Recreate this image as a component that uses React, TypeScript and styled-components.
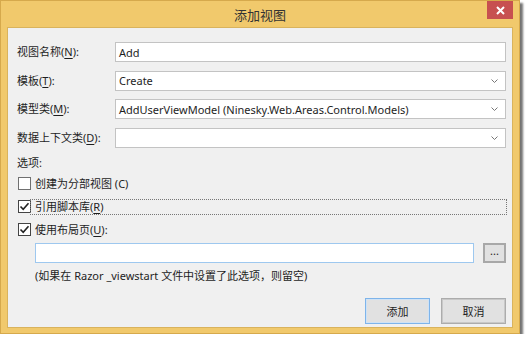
import React from 'react';
import styled, { createGlobalStyle } from 'styled-components';

const GlobalStyle = createGlobalStyle`
  body {
    margin: 0;
    background: #ffffff;
    font-family: "Noto Sans", "Noto Sans CJK SC", sans-serif;
  }
`;

const Window = styled.div`
  width: 518px;
  height: 332px;
  border: 1px solid #d6a94c;
  background: #f1c96c;
  box-shadow: 3px 3px 2px rgba(0, 0, 0, 0.55);
  display: flex;
  flex-direction: column;
`;

const TitleBar = styled.div`
  height: 26px;
  display: grid;
  grid-template-columns: 1fr auto 1fr;
  align-items: start;
`;

const Title = styled.div`
  grid-column: 2;
  padding-top: 5px;
  font-family: "Noto Sans CJK SC", sans-serif;
  font-size: 13px;
  line-height: 17px;
  color: #333333;
`;

const CloseButton = styled.div`
  grid-column: 3;
  justify-self: end;
  margin-right: 6px;
  width: 26px;
  height: 18px;
  background: #c75050;
  color: #ffffff;
  display: flex;
  align-items: center;
  justify-content: center;
`;

const Content = styled.div`
  flex: 1;
  margin: 0 6px 5px 6px;
  border: 1px solid #d9b35d;
  background: #f0f0f0;
  padding: 14px 6px 0 9px;
  display: flex;
  flex-direction: column;
  font-family: "Noto Sans", "Noto Sans CJK SC", sans-serif;
  font-size: 11px;
  color: #1e1e1e;
`;

const Fields = styled.div`
  display: flex;
  flex-direction: column;
  gap: 8.5px;
`;

const Row = styled.div`
  display: flex;
  align-items: center;
  height: 20px;
`;

const Label = styled.div`
  width: 98px;
  flex-shrink: 0;
  line-height: 16px;
`;

const Key = styled.span`
  text-decoration: underline;
  text-underline-offset: 2px;
`;

const Box = styled.div`
  flex: 1;
  height: 20px;
  box-sizing: border-box;
  border: 1px solid ${(p: { $focus?: boolean }) => (p.$focus ? '#9ec8ef' : '#c3c3c3')};
  background: #ffffff;
  display: flex;
  align-items: center;
  padding: 0 7px 0 3px;
  font-size: 11px;
  color: #1e1e1e;
`;

const BoxText = styled.span`
  flex: 1;
  white-space: nowrap;
`;

const SectionLabel = styled.div`
  margin-top: 7px;
  line-height: 16px;
`;

const Options = styled.div`
  margin-top: 6px;
  display: flex;
  flex-direction: column;
  gap: 9px;
`;

const CheckRow = styled.div`
  display: flex;
  align-items: center;
  height: 14px;
  padding-left: 1px;
`;

const CheckBox = styled.div`
  width: 13px;
  height: 13px;
  box-sizing: border-box;
  border: 1px solid ${(p: { $checked?: boolean }) => (p.$checked ? '#444444' : '#707070')};
  background: #ffffff;
  display: flex;
  align-items: center;
  justify-content: center;
  flex-shrink: 0;
`;

const CheckText = styled.div<{ $focused?: boolean }>`
  line-height: 14px;
  padding-left: 4px;
  ${(p) => (p.$focused ? 'flex: 1; outline: 1px dotted #777; outline-offset: 0;' : '')}
`;

const Layout = styled.div`
  margin-top: 6px;
  padding-left: 18px;
  display: flex;
  gap: 9px;
`;

const BrowseButton = styled.div`
  width: 23px;
  height: 20px;
  box-sizing: border-box;
  border: 2px solid #a8a8a8;
  background: #e1e1e1;
  display: flex;
  align-items: center;
  justify-content: center;
  font-size: 11px;
  line-height: 8px;
  padding-bottom: 4px;
`;

const Hint = styled.div`
  margin-top: 5px;
  padding-left: 18px;
  line-height: 16px;
`;

const Buttons = styled.div`
  margin-top: 14px;
  display: flex;
  justify-content: flex-end;
  gap: 11px;
`;

const Button = styled.div<{ $default?: boolean }>`
  width: 65px;
  height: 26px;
  box-sizing: border-box;
  border: 1px solid ${(p) => (p.$default ? '#7eb4ea' : '#acacac')};
  box-shadow: inset 0 0 0 1px ${(p) => (p.$default ? '#cfe2f5' : '#c8c8c8')};
  background: #e1e1e1;
  display: flex;
  align-items: center;
  justify-content: center;
  font-size: 11px;
`;

const Chevron = () => (
  <svg width="7" height="4" viewBox="0 0 7 4">
    <path d="M0.5 0.5 L3.5 3.5 L6.5 0.5" fill="none" stroke="#777" strokeWidth="1" />
  </svg>
);

const Check = () => (
  <svg width="11" height="11" viewBox="0 0 11 11">
    <path d="M1.5 5.5 L4.2 8.3 L9.5 2.2" fill="none" stroke="#222" strokeWidth="1.6" />
  </svg>
);

export default function App() {
  return (
    <>
      <GlobalStyle />
      <Window>
        <TitleBar>
          <Title>添加视图</Title>
          <CloseButton>
            <svg width="9" height="9" viewBox="0 0 9 9">
              <path d="M1 1 L8 8 M8 1 L1 8" stroke="#fff" strokeWidth="2" />
            </svg>
          </CloseButton>
        </TitleBar>
        <Content>
          <Fields>
            <Row>
              <Label>视图名称(<Key>N</Key>):</Label>
              <Box><BoxText>Add</BoxText></Box>
            </Row>
            <Row>
              <Label>模板(<Key>T</Key>):</Label>
              <Box><BoxText>Create</BoxText><Chevron /></Box>
            </Row>
            <Row>
              <Label>模型类(<Key>M</Key>):</Label>
              <Box><BoxText>AddUserViewModel (Ninesky.Web.Areas.Control.Models)</BoxText><Chevron /></Box>
            </Row>
            <Row>
              <Label>数据上下文类(<Key>D</Key>):</Label>
              <Box><BoxText /><Chevron /></Box>
            </Row>
          </Fields>
          <SectionLabel>选项:</SectionLabel>
          <Options>
            <CheckRow>
              <CheckBox />
              <CheckText>创建为分部视图 (C)</CheckText>
            </CheckRow>
            <CheckRow>
              <CheckBox $checked><Check /></CheckBox>
              <CheckText $focused>引用脚本库(<Key>R</Key>)</CheckText>
            </CheckRow>
            <CheckRow>
              <CheckBox $checked><Check /></CheckBox>
              <CheckText>使用布局页(<Key>U</Key>):</CheckText>
            </CheckRow>
          </Options>
          <Layout>
            <Box $focus />
            <BrowseButton>...</BrowseButton>
          </Layout>
          <Hint>(如果在 Razor _viewstart 文件中设置了此选项，则留空)</Hint>
          <Buttons>
            <Button $default>添加</Button>
            <Button>取消</Button>
          </Buttons>
        </Content>
      </Window>
    </>
  );
}
